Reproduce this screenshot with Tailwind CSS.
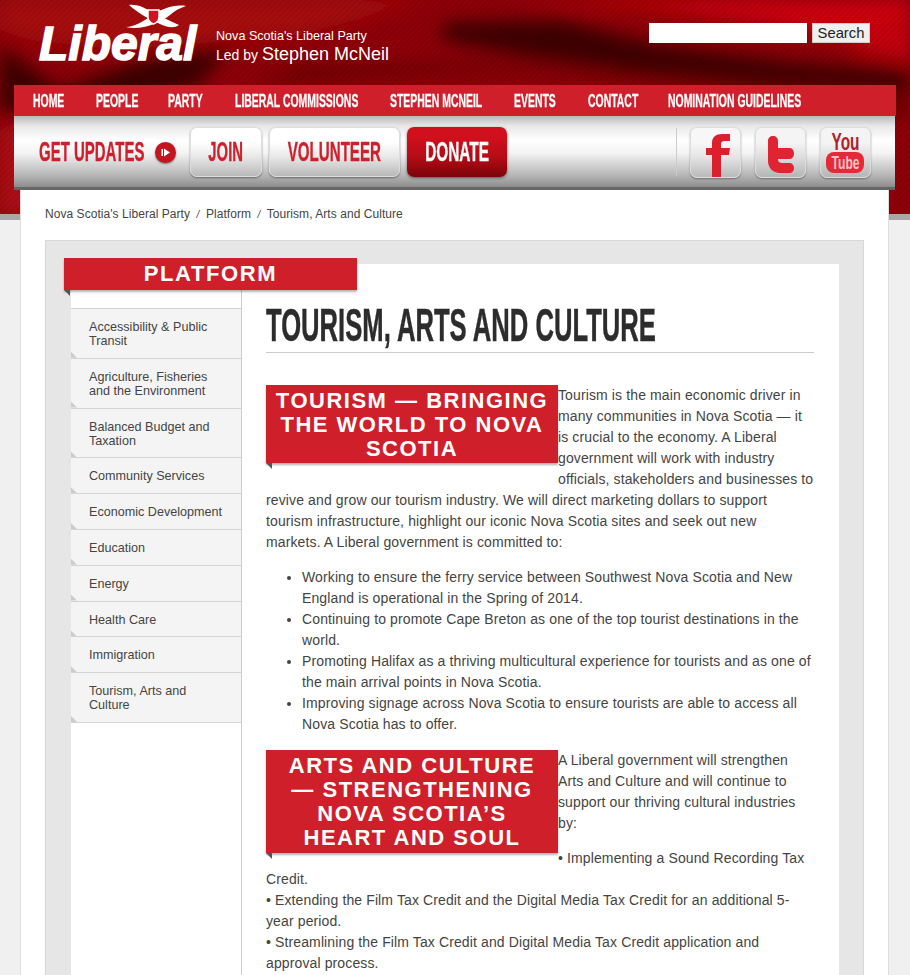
<!DOCTYPE html>
<html lang="en">
<head>
    <meta charset="UTF-8">
    <meta name="viewport" content="width=device-width, initial-scale=1.0">
    <title>Tourism, Arts and Culture</title>
    <script src="https://cdn.jsdelivr.net/npm/@tailwindcss/browser@4"></script>
</head>
<body class="bg-[#f0f0f0] font-['Liberation_Sans',Arial,sans-serif] text-[#444]">
    <div class="relative h-[975px] w-[910px] overflow-hidden">

        <!-- red cloth behind the header -->
        <svg class="absolute left-0 top-0" width="910" height="214" viewBox="0 0 910 214">
            <defs>
                <filter id="soft" x="-20%" y="-50%" width="140%" height="200%"><feGaussianBlur stdDeviation="9"/></filter>
                <pattern id="weave" width="4" height="4" patternUnits="userSpaceOnUse" patternTransform="rotate(45)">
                    <rect width="2" height="4" fill="#000" opacity="0.07"/>
                </pattern>
            </defs>
            <rect width="910" height="214" fill="#8f0008"/>
            <g filter="url(#soft)">
                <path d="M0 0H430L300 35 120 50 30 40 0 30Z" fill="#a80a10"/>
                <path d="M520 0H910V50L780 25 640 8Z" fill="#d0000c"/>
                <path d="M0 45 60 90 140 60 230 45 200 85 40 130 0 110Z" fill="#3d0003"/>
                <path d="M445 22 560 20 660 45 790 62 910 72V92L780 84 640 72 520 55 440 40Z" fill="#3e0002"/>
                <path d="M250 85 500 70 700 85 850 100 910 120V95L700 78 500 62 300 65Z" fill="#6c0004"/>
                <path d="M0 130 40 110 60 214H0Z" fill="#b00a12"/>
                <path d="M830 25 910 15V60L860 50Z" fill="#c8000a"/>
            </g>
            <rect width="910" height="214" fill="url(#weave)"/>
        </svg>
        <div class="absolute left-0 top-[214px] h-[6px] w-full bg-[#a8a8a8]"></div>

        <div class="relative">
            <!-- logo, tagline, search -->
            <div class="flex h-[85px] items-start">
                <div class="relative ml-[39px] h-[85px] w-[177px]">
                    <svg class="absolute left-[85px] top-[3px]" width="66" height="28" viewBox="0 0 66 28" fill="none">
                        <path d="M5 2C15 1 22 6 30 10 38 14 46 18 55 22 50 26 42 24 36 21 26 17 14 10 5 2Z" fill="#fff"/>
                        <path d="M2 24C10 24 20 18 30 11 38 6 50 1 62 3 56 5 50 8 46 12 36 20 16 28 2 24Z" fill="#fff"/>
                        <path d="M24 7H35V14C35 18 32 20 29.500 21 27 20 24 18 24 14Z" fill="#d0141f" stroke="#fff" stroke-width="1.500"/>
                    </svg>
                    <span class="absolute left-0 top-[19px] text-[48px] leading-[50px] font-bold italic text-white [-webkit-text-stroke:1.5px_#fff]">Liberal</span>
                </div>
                <div class="pt-[28px] text-white">
                    <div class="text-[12.6px] leading-[16px]">Nova Scotia's Liberal Party</div>
                    <div class="text-[14px] leading-[20px]">Led by <span class="text-[18px]">Stephen McNeil</span></div>
                </div>
                <form class="ml-auto mr-[40px] mt-[23px] flex gap-[5px]">
                    <input type="text" class="h-[20px] w-[158px] bg-white">
                    <button type="button" class="h-[20px] w-[58px] border border-[#ccc] bg-[#efefef] text-[14.8px] leading-[18px] text-[#222]">Search</button>
                </form>
            </div>

            <!-- main nav -->
            <nav class="ml-[14px] flex h-[31px] w-[882px] items-center gap-[32px] bg-[#cf1f2b] pl-[18.5px] pt-[2px] font-['Liberation_Sans_Narrow','Liberation_Sans',sans-serif] text-[18px] font-bold text-white [-webkit-text-stroke-width:0.3px]">
                <a class="w-[31px] origin-left scale-x-[0.58] whitespace-nowrap">HOME</a>
                <a class="w-[40px] origin-left scale-x-[0.58] whitespace-nowrap">PEOPLE</a>
                <a class="w-[35px] origin-left scale-x-[0.58] whitespace-nowrap">PARTY</a>
                <a class="w-[123px] origin-left scale-x-[0.58] whitespace-nowrap">LIBERAL COMMISSIONS</a>
                <a class="w-[92px] origin-left scale-x-[0.58] whitespace-nowrap">STEPHEN MCNEIL</a>
                <a class="w-[42px] origin-left scale-x-[0.58] whitespace-nowrap">EVENTS</a>
                <a class="w-[48px] origin-left scale-x-[0.58] whitespace-nowrap">CONTACT</a>
                <a class="w-[133px] origin-left scale-x-[0.58] whitespace-nowrap">NOMINATION GUIDELINES</a>
            </nav>

            <!-- updates bar -->
            <div class="ml-[14px] flex h-[74px] w-[881px] items-start border-b-[3px] border-[#666] bg-[linear-gradient(#b9b9b9_0%,#e8e8e8_14%,#fff_34%,#f4f4f4_52%,#b5b5b5_84%,#8c8c8c_100%)] pt-[11px] font-['Liberation_Sans_Narrow','Liberation_Sans',sans-serif] text-[28px] font-bold text-[#cf1f2b] [-webkit-text-stroke-width:0.4px]">
                <span class="ml-[25px] mt-[10px] w-[105px] origin-left scale-x-[0.535] whitespace-nowrap leading-[30px]">GET UPDATES</span>
                <span class="ml-[11px] mt-[15px] flex h-[21px] w-[21px] items-center justify-center rounded-full bg-[#c4161f] shadow-[0_1px_2px_rgba(0,0,0,0.5)]">
                    <svg width="11" height="11" viewBox="0 0 11 11"><path d="M1.500 2H3V9H1.500ZM4 1.500 10 5.500 4 9.500Z" fill="#fff"/></svg>
                </span>
                <a class="ml-[14px] flex h-[50px] w-[72px] items-center justify-center rounded-[7px] border border-[#ddd] bg-[linear-gradient(#fff_30%,#e8e8e8_60%,#b9b9b9)] shadow-[0_1px_2px_rgba(0,0,0,0.4)]"><span class="scale-x-[0.53] whitespace-nowrap">JOIN</span></a>
                <a class="ml-[7px] flex h-[50px] w-[131px] items-center justify-center rounded-[7px] border border-[#ddd] bg-[linear-gradient(#fff_30%,#e8e8e8_60%,#b9b9b9)] shadow-[0_1px_2px_rgba(0,0,0,0.4)]"><span class="scale-x-[0.54] whitespace-nowrap">VOLUNTEER</span></a>
                <a class="ml-[7px] flex h-[50px] w-[100px] items-center justify-center rounded-[7px] bg-[linear-gradient(#d0101c_20%,#b50c16_60%,#7c0209)] text-white shadow-[0_1px_3px_rgba(0,0,0,0.5)]"><span class="scale-x-[0.55] whitespace-nowrap">DONATE</span></a>
                <div class="ml-[169px] mt-[1px] h-[48px] w-px bg-[#ccc]"></div>
                <a class="ml-[13px] h-[51px] w-[51px] rounded-[7px] border border-[#ddd] bg-[linear-gradient(#f7f7f7_30%,#e4e4e4_60%,#b9b9b9)] shadow-[0_1px_2px_rgba(0,0,0,0.35)]">
                    <svg width="49" height="49" viewBox="0 0 49 49">
                        <path d="M21 49V27H15V20H21V15C21 9 25 6 31 6H39V13H34C31 13 30 14 30 16V20H39L38 27H30V49Z" fill="#d8202e"/>
                    </svg>
                </a>
                <a class="ml-[14px] h-[51px] w-[51px] rounded-[7px] border border-[#ddd] bg-[linear-gradient(#f4f4f4_30%,#ddd_60%,#b5b5b5)] shadow-[0_1px_2px_rgba(0,0,0,0.35)]">
                    <svg width="49" height="49" viewBox="0 0 49 49">
                        <path d="M12 13C12 10 14 8 17 8 20 8 22 10 22 13V20H33C36 20 38 22 38 25.500 38 29 36 31 33 31H22V32C22 34 24 35 26 35H33C36 35 38 37 38 40 38 43 36 45 33 45H24C17 45 12 40 12 33Z" fill="#e02432"/>
                    </svg>
                </a>
                <a class="ml-[14px] h-[51px] w-[51px] rounded-[7px] border border-[#ddd] bg-[linear-gradient(#f4f4f4_30%,#ddd_60%,#b5b5b5)] shadow-[0_1px_2px_rgba(0,0,0,0.35)]">
                    <svg width="49" height="49" viewBox="0 0 49 49">
                        <text x="24.500" y="22" text-anchor="middle" font-family="Liberation Sans Narrow, Liberation Sans, sans-serif" font-weight="700" font-size="23" fill="#b3202a" stroke="none" textLength="28" lengthAdjust="spacingAndGlyphs">You</text>
                        <rect x="5" y="24" width="38" height="21" rx="8" fill="#e42a38"/>
                        <text x="24.500" y="41" text-anchor="middle" font-family="Liberation Sans Narrow, Liberation Sans, sans-serif" font-weight="700" font-size="18" fill="#f6c4c8" stroke="none" textLength="28" lengthAdjust="spacingAndGlyphs">Tube</text>
                    </svg>
                </a>
            </div>

            <!-- page -->
            <div class="ml-[20px] h-[800px] w-[869px] border-x border-[#ddd] bg-white px-[24px]">
                <div class="flex h-[50px] items-center gap-[6.5px] pb-[2px] text-[12px] tracking-[0.05px] text-[#444]">
                    <span>Nova Scotia's Liberal Party</span><span class="text-[10px] italic">/</span>
                    <span>Platform</span><span class="text-[10px] italic">/</span>
                    <span>Tourism, Arts and Culture</span>
                </div>

                <div class="relative h-[760px] w-[819px] border border-[#d8d8d8] bg-[#e6e6e6] pl-[25px] pr-[24px] pt-[23px]">
                    <!-- ribbon over the panel edge -->
                    <div class="absolute left-[18px] top-[17px] z-10 h-[32px] w-[293px] bg-[#cf1f2b] text-center text-[22px] font-bold leading-[31px] tracking-[1.6px] text-white shadow-[0_2px_2px_rgba(0,0,0,0.3)]">
                        PLATFORM
                        <span class="absolute left-0 top-[32px] h-[6px] w-[6px] bg-[#555] [clip-path:polygon(0_0,100%_0,100%_100%)]"></span>
                    </div>

                    <div class="flex h-full bg-white">
                        <aside class="w-[171px] shrink-0 border-r border-[#ccc] pt-[44px] text-[12.6px] leading-[14px] text-[#444]">
                            <a class="relative block border-t border-[#d4d4d4] bg-[#f4f4f4] pb-[9.8px] pl-[18px] pr-[14px] pt-[11px]">Accessibility &amp; Public Transit<i class="absolute bottom-0 left-0 h-[6px] w-[6px] bg-[#ccc] [clip-path:polygon(0_0,100%_100%,0_100%)]"></i></a>
                            <a class="relative block border-t border-[#d4d4d4] bg-[#f4f4f4] pb-[9.8px] pl-[18px] pr-[14px] pt-[11px]">Agriculture, Fisheries and the Environment<i class="absolute bottom-0 left-0 h-[6px] w-[6px] bg-[#ccc] [clip-path:polygon(0_0,100%_100%,0_100%)]"></i></a>
                            <a class="relative block border-t border-[#d4d4d4] bg-[#f4f4f4] pb-[9.8px] pl-[18px] pr-[14px] pt-[11px]">Balanced Budget and Taxation<i class="absolute bottom-0 left-0 h-[6px] w-[6px] bg-[#ccc] [clip-path:polygon(0_0,100%_100%,0_100%)]"></i></a>
                            <a class="relative block border-t border-[#d4d4d4] bg-[#f4f4f4] pb-[9.8px] pl-[18px] pr-[14px] pt-[11px]">Community Services<i class="absolute bottom-0 left-0 h-[6px] w-[6px] bg-[#ccc] [clip-path:polygon(0_0,100%_100%,0_100%)]"></i></a>
                            <a class="relative block border-t border-[#d4d4d4] bg-[#f4f4f4] pb-[9.8px] pl-[18px] pr-[14px] pt-[11px]">Economic Development<i class="absolute bottom-0 left-0 h-[6px] w-[6px] bg-[#ccc] [clip-path:polygon(0_0,100%_100%,0_100%)]"></i></a>
                            <a class="relative block border-t border-[#d4d4d4] bg-[#f4f4f4] pb-[9.8px] pl-[18px] pr-[14px] pt-[11px]">Education<i class="absolute bottom-0 left-0 h-[6px] w-[6px] bg-[#ccc] [clip-path:polygon(0_0,100%_100%,0_100%)]"></i></a>
                            <a class="relative block border-t border-[#d4d4d4] bg-[#f4f4f4] pb-[9.8px] pl-[18px] pr-[14px] pt-[11px]">Energy<i class="absolute bottom-0 left-0 h-[6px] w-[6px] bg-[#ccc] [clip-path:polygon(0_0,100%_100%,0_100%)]"></i></a>
                            <a class="relative block border-t border-[#d4d4d4] bg-[#f4f4f4] pb-[9.8px] pl-[18px] pr-[14px] pt-[11px]">Health Care<i class="absolute bottom-0 left-0 h-[6px] w-[6px] bg-[#ccc] [clip-path:polygon(0_0,100%_100%,0_100%)]"></i></a>
                            <a class="relative block border-t border-[#d4d4d4] bg-[#f4f4f4] pb-[9.8px] pl-[18px] pr-[14px] pt-[11px]">Immigration<i class="absolute bottom-0 left-0 h-[6px] w-[6px] bg-[#ccc] [clip-path:polygon(0_0,100%_100%,0_100%)]"></i></a>
                            <a class="relative block border-y border-[#d4d4d4] bg-[#f4f4f4] pb-[9.8px] pl-[18px] pr-[14px] pt-[11px]">Tourism, Arts and Culture<i class="absolute bottom-0 left-0 h-[6px] w-[6px] bg-[#ccc] [clip-path:polygon(0_0,100%_100%,0_100%)]"></i></a>
                        </aside>

                        <main class="ml-[24px] w-[548px] text-[14px] leading-[21px] tracking-[0.12px]">
                            <div class="mb-[32px] h-[89px] border-b border-[#ccc] pt-[36px]">
                                <h1 class="origin-left scale-x-[0.545] whitespace-nowrap font-['Liberation_Sans_Narrow','Liberation_Sans',sans-serif] text-[47px] leading-[50px] font-bold tracking-normal text-[#2c2c2c] [-webkit-text-stroke-width:0.5px]">TOURISM, ARTS AND CULTURE</h1>
                            </div>

                            <h2 class="relative float-left mb-[8px] w-[292px] bg-[#cf1f2b] px-[9px] pb-[2px] pt-[4px] text-center text-[22px] font-bold leading-[24px] tracking-[1.5px] text-white shadow-[0_2px_2px_rgba(0,0,0,0.3)]">
                                TOURISM — BRINGING THE WORLD TO NOVA SCOTIA
                                <span class="absolute left-0 top-full h-[6px] w-[6px] bg-[#555] [clip-path:polygon(0_0,100%_0,100%_100%)]"></span>
                            </h2>
                            <p class="mb-[14px]">Tourism is the main economic driver in many communities in Nova Scotia — it is crucial to the economy. A Liberal government will work with industry officials, stakeholders and businesses to revive and grow our tourism industry. We will direct marketing dollars to support tourism infrastructure, highlight our iconic Nova Scotia sites and seek out new markets. A Liberal government is committed to:</p>
                            <ul class="mb-[15px] list-disc pl-[36px]">
                                <li>Working to ensure the ferry service between Southwest Nova Scotia and New England is operational in the Spring of 2014.</li>
                                <li>Continuing to promote Cape Breton as one of the top tourist destinations in the world.</li>
                                <li>Promoting Halifax as a thriving multicultural experience for tourists and as one of the main arrival points in Nova Scotia.</li>
                                <li>Improving signage across Nova Scotia to ensure tourists are able to access all Nova Scotia has to offer.</li>
                            </ul>

                            <h2 class="relative float-left mb-[8px] w-[292px] bg-[#cf1f2b] px-[9px] py-[3.5px] text-center text-[22px] font-bold leading-[24px] tracking-[1.5px] text-white shadow-[0_2px_2px_rgba(0,0,0,0.3)]">
                                ARTS AND CULTURE — STRENGTHENING NOVA SCOTIA’S HEART AND SOUL
                                <span class="absolute left-0 top-full h-[6px] w-[6px] bg-[#555] [clip-path:polygon(0_0,100%_0,100%_100%)]"></span>
                            </h2>
                            <p class="mb-[14px]">A Liberal government will strengthen Arts and Culture and will continue to support our thriving cultural industries by:</p>
                            <p>• Implementing a Sound Recording Tax Credit.<br>• Extending the Film Tax Credit and the Digital Media Tax Credit for an additional 5-year period.<br>• Streamlining the Film Tax Credit and Digital Media Tax Credit application and approval process.</p>
                        </main>
                    </div>
                </div>
            </div>
        </div>
    </div>
</body>
</html>
